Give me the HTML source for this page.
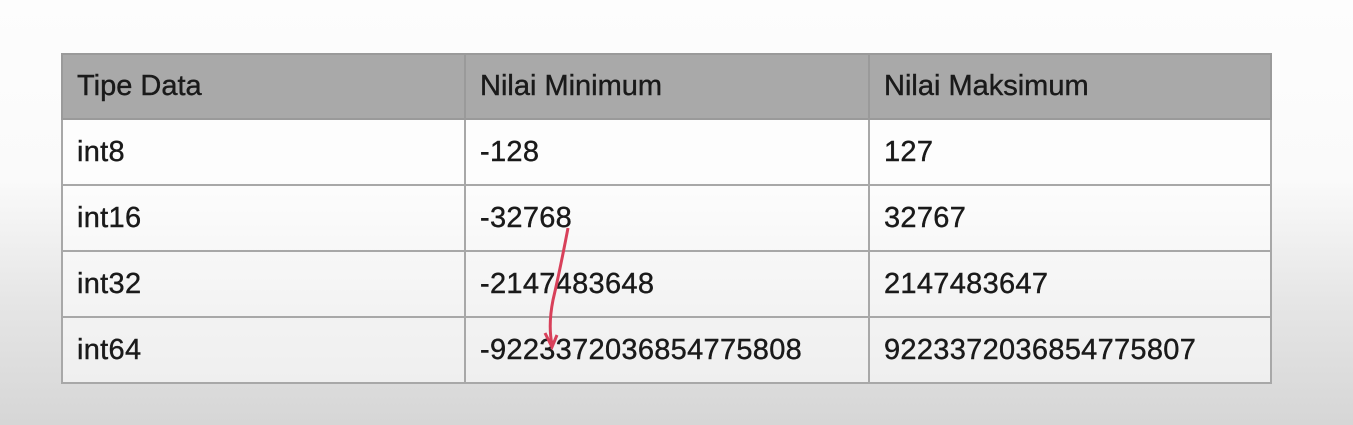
<!DOCTYPE html>
<html><head><style>
body{margin:0;width:1353px;height:425px;overflow:hidden;background:linear-gradient(#fdfdfd 0px,#fafafa 180px,#e6e6e6 300px,#d6d6d6 425px);font-family:"Liberation Sans",sans-serif;position:relative}
table{position:absolute;left:61px;top:53px;border-collapse:collapse;width:1211px;table-layout:fixed}
td{border:2px solid #a8a8a8;height:64px;padding:0 0 0 14px;font-size:29px;letter-spacing:0.3px;color:#1a1a1a;-webkit-text-stroke:0.4px #1a1a1a;background:rgba(255,255,255,0.55);white-space:nowrap}
tr.h td{background:#a9a9a9;height:63px;border-color:#9a9a9a;letter-spacing:0}
</style></head><body>
<table>
<colgroup><col style="width:403px"><col style="width:404px"><col></colgroup>
<tr class="h"><td>Tipe Data</td><td>Nilai Minimum</td><td>Nilai Maksimum</td></tr>
<tr><td>int8</td><td>-128</td><td>127</td></tr>
<tr><td>int16</td><td>-32768</td><td>32767</td></tr>
<tr><td>int32</td><td>-2147483648</td><td>2147483647</td></tr>
<tr><td>int64</td><td>-9223372036854775808</td><td>9223372036854775807</td></tr>
</table>
<svg width="1353" height="425" style="position:absolute;left:0;top:0"><path d="M568 228 Q560 270 553 300 Q548 325 552 345" stroke="#d8405a" stroke-width="3" fill="none"/><path d="M545 333 L552 347 L557 335" stroke="#d8405a" stroke-width="3" fill="none"/></svg>
</body></html>
